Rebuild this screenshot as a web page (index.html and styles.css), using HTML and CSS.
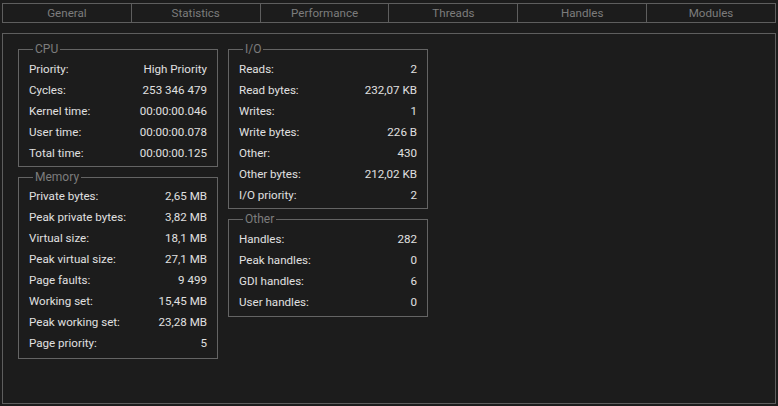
FILE: index.html
```html
<!DOCTYPE html>
<html lang="en">
<head>
<meta charset="utf-8">
<title>Statistics</title>
<link rel="stylesheet" href="styles.css">
</head>
<body>
<div class="window">
  <nav class="tabs">
    <div class="tab">General</div>
    <div class="tab">Statistics</div>
    <div class="tab">Performance</div>
    <div class="tab">Threads</div>
    <div class="tab">Handles</div>
    <div class="tab">Modules</div>
  </nav>
  <div class="panel">
    <div class="col">
      <fieldset class="group group--cpu">
        <legend>CPU</legend>
        <div class="row"><span>Priority:</span><span>High Priority</span></div>
        <div class="row"><span>Cycles:</span><span>253 346 479</span></div>
        <div class="row"><span>Kernel time:</span><span>00:00:00.046</span></div>
        <div class="row"><span>User time:</span><span>00:00:00.078</span></div>
        <div class="row"><span>Total time:</span><span>00:00:00.125</span></div>
      </fieldset>
      <fieldset class="group group--memory">
        <legend>Memory</legend>
        <div class="row"><span>Private bytes:</span><span>2,65 MB</span></div>
        <div class="row"><span>Peak private bytes:</span><span>3,82 MB</span></div>
        <div class="row"><span>Virtual size:</span><span>18,1 MB</span></div>
        <div class="row"><span>Peak virtual size:</span><span>27,1 MB</span></div>
        <div class="row"><span>Page faults:</span><span>9 499</span></div>
        <div class="row"><span>Working set:</span><span>15,45 MB</span></div>
        <div class="row"><span>Peak working set:</span><span>23,28 MB</span></div>
        <div class="row"><span>Page priority:</span><span>5</span></div>
      </fieldset>
    </div>
    <div class="col">
      <fieldset class="group group--io">
        <legend>I/O</legend>
        <div class="row"><span>Reads:</span><span>2</span></div>
        <div class="row"><span>Read bytes:</span><span>232,07 KB</span></div>
        <div class="row"><span>Writes:</span><span>1</span></div>
        <div class="row"><span>Write bytes:</span><span>226 B</span></div>
        <div class="row"><span>Other:</span><span>430</span></div>
        <div class="row"><span>Other bytes:</span><span>212,02 KB</span></div>
        <div class="row"><span>I/O priority:</span><span>2</span></div>
      </fieldset>
      <fieldset class="group group--other">
        <legend>Other</legend>
        <div class="row"><span>Handles:</span><span>282</span></div>
        <div class="row"><span>Peak handles:</span><span>0</span></div>
        <div class="row"><span>GDI handles:</span><span>6</span></div>
        <div class="row"><span>User handles:</span><span>0</span></div>
      </fieldset>
    </div>
  </div>
</div>
</body>
</html>
```
FILE: styles.css
```css
html, body {
  margin: 0;
  background: #1c1c1c;
}
body {
  font-family: Roboto, "Noto Sans", sans-serif;
  font-size: 11.6px;
  color: #e0e0e0;
}
.window {
  padding: 3px 2px 0;
}
.tabs {
  display: flex;
  height: 20px;
  box-sizing: border-box;
  border: 1px solid #5e5e5e;
  border-right: 0;
}
.tab {
  flex: 1 1 0;
  border-right: 1px solid #5e5e5e;
  text-align: center;
  line-height: 18px;
  color: #7c7c7c;
}
.panel {
  margin-top: 10px;
  height: 371px;
  box-sizing: border-box;
  border: 1px solid #5e5e5e;
  padding: 8px 15px;
  display: flex;
  gap: 10px;
  align-items: flex-start;
}
.col {
  width: 200px;
  display: flex;
  flex-direction: column;
  gap: 3px;
}
.group {
  margin: 0;
  min-width: 0;
  border: 1px solid #646464;
  padding: 2px 10px 2px;
}
.group--memory {
  padding-top: 1px;
  padding-bottom: 4px;
}
.group--other {
  padding-bottom: 3px;
}
.group legend {
  margin-left: 4px;
  padding: 0 2px;
  line-height: 15px;
  font-size: 12px;
  color: #7d7d7d;
}
.row {
  display: flex;
  justify-content: space-between;
  height: 21px;
  line-height: 21px;
  white-space: nowrap;
}
```
